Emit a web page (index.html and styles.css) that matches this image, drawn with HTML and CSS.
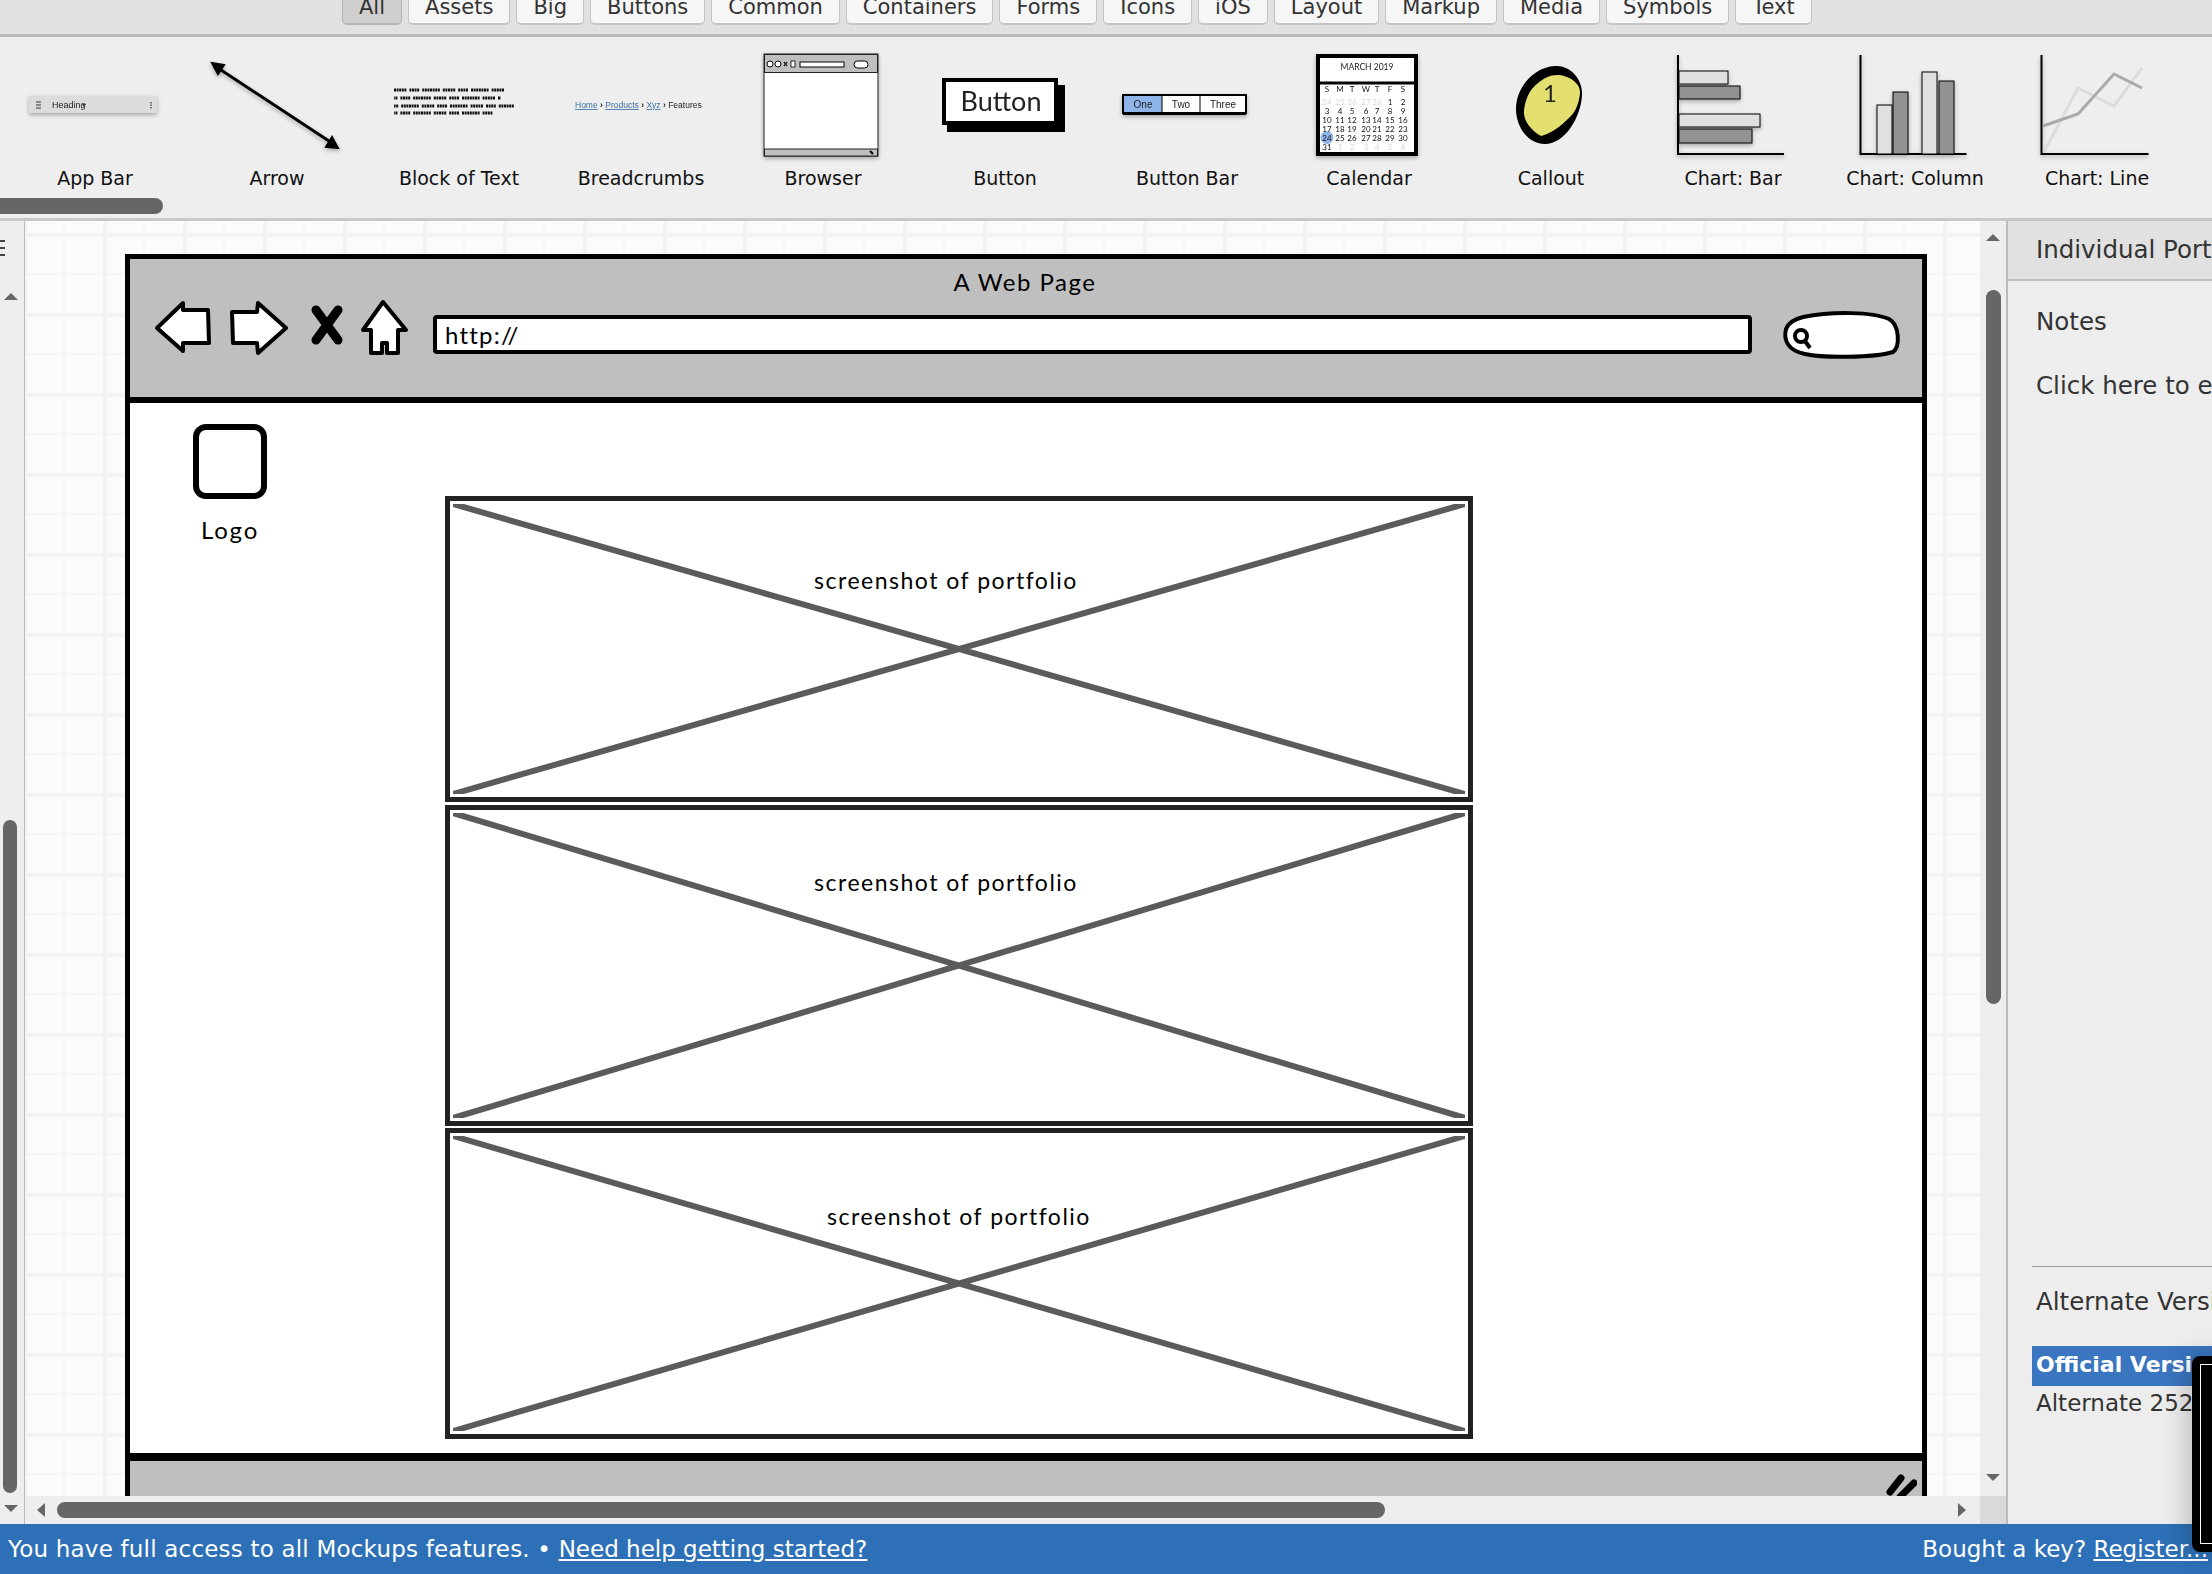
FILE: index.html
```html
<!DOCTYPE html>
<html lang="en">
<head>
  <meta charset="UTF-8">
  <title>Mockups Editor</title>
  <link rel="stylesheet" href="styles.css">
</head>
<body>
<div class="app">

  <!-- Library tabs -->
  <div class="tabbar">
    <div class="tab active">All</div>
    <div class="tab">Assets</div>
    <div class="tab">Big</div>
    <div class="tab">Buttons</div>
    <div class="tab">Common</div>
    <div class="tab">Containers</div>
    <div class="tab">Forms</div>
    <div class="tab">Icons</div>
    <div class="tab">iOS</div>
    <div class="tab">Layout</div>
    <div class="tab">Markup</div>
    <div class="tab">Media</div>
    <div class="tab">Symbols</div>
    <div class="tab">Text</div>
  </div>

  <!-- Component strip -->
  <div class="library">
    <div class="lib-row">
      <div class="lib-item">
        <svg class="thumb" viewBox="0 0 182 125">
          <rect class="drop" x="25" y="59" width="128" height="17" rx="1" fill="#dcdcdc"/>
          <path d="M32 65h5M32 68h5M32 71h5" stroke="#333" stroke-width="1"/>
          <text class="tiny" x="48" y="71">Heading</text>
          <path d="M78 67l4 0-2 3z" fill="#333"/>
          <path d="M147 65v1.500M147 67.500v1.500M147 70v1.500" stroke="#333" stroke-width="1.200"/>
        </svg>
        <div class="lib-label">App Bar</div>
      </div>
      <div class="lib-item">
        <svg class="thumb" viewBox="0 0 182 125">
          <g class="drop">
            <path d="M32 31L146 106" stroke="#000" stroke-width="3"/>
            <path d="M26 26l12 2-6 9zM152 111l-12-1 6-10z" fill="#000" stroke="#000" stroke-width="2"/>
          </g>
        </svg>
        <div class="lib-label">Arrow</div>
      </div>
      <div class="lib-item">
        <svg class="thumb" viewBox="0 0 182 125">
          <g class="scribble">
            <path d="M26 53H138"/>
            <path class="scribble-b" d="M26 61H133"/>
            <path class="scribble-c" d="M26 69H146"/>
            <path class="scribble-b" d="M26 76H125"/>
          </g>
        </svg>
        <div class="lib-label">Block of Text</div>
      </div>
      <div class="lib-item">
        <svg class="thumb" viewBox="0 0 182 125">
          <text class="tiny crumbs" x="25" y="71"><tspan class="crumb-link">Home</tspan> <tspan class="crumb-sep">›</tspan> <tspan class="crumb-link">Products</tspan> <tspan class="crumb-sep">›</tspan> <tspan class="crumb-link">Xyz</tspan> <tspan class="crumb-sep">›</tspan> Features</text>
        </svg>
        <div class="lib-label">Breadcrumbs</div>
      </div>
      <div class="lib-item">
        <svg class="thumb" viewBox="0 0 182 125">
          <g class="drop">
            <rect x="32" y="17" width="114" height="102" fill="#fff" stroke="#222" stroke-width="1"/>
            <rect x="32.500" y="17.500" width="113" height="18" fill="#bfbfbf" stroke="#222" stroke-width="1"/>
            <rect x="32.500" y="112" width="113" height="7" fill="#bfbfbf" stroke="#222" stroke-width="1"/>
          </g>
          <circle cx="38" cy="27" r="3" fill="#fff" stroke="#000"/>
          <circle cx="46" cy="27" r="3" fill="#fff" stroke="#000"/>
          <path d="M52 25l3 4M55 25l-3 4" stroke="#000" stroke-width="1.200"/>
          <rect x="59" y="24" width="4" height="6" fill="#fff" stroke="#000" stroke-width=".8"/>
          <rect x="68" y="25" width="44" height="5" fill="#fff" stroke="#000" stroke-width="1"/>
          <rect x="122" y="24" width="14" height="7" rx="3.500" fill="#fff" stroke="#000" stroke-width="1"/>
          <path d="M138 114l3 3" stroke="#000" stroke-width="2"/>
        </svg>
        <div class="lib-label">Browser</div>
      </div>
      <div class="lib-item">
        <svg class="thumb" viewBox="0 0 182 125">
          <rect x="33" y="48" width="118" height="47" fill="#000"/>
          <rect x="30" y="43" width="112" height="43" fill="#fff" stroke="#000" stroke-width="4"/>
          <text class="thumb-button" x="87" y="74">Button</text>
        </svg>
        <div class="lib-label">Button</div>
      </div>
      <div class="lib-item">
        <svg class="thumb" viewBox="0 0 182 125">
          <g class="drop">
            <rect x="27" y="58" width="123" height="18" fill="#fff" stroke="#000" stroke-width="2"/>
            <rect x="28" y="59" width="38" height="16" fill="#8fb4ea"/>
            <path d="M66 58v18M104 58v18" stroke="#000" stroke-width="1"/>
            <path d="M27 77H150" stroke="#000" stroke-width="2"/>
          </g>
          <text class="tiny mid" x="47" y="71">One</text>
          <text class="tiny mid" x="85" y="71">Two</text>
          <text class="tiny mid" x="127" y="71">Three</text>
        </svg>
        <div class="lib-label">Button Bar</div>
      </div>
      <div class="lib-item">
        <svg class="thumb" viewBox="0 0 182 125">
          <g class="drop">
            <rect x="40" y="19" width="98" height="98" fill="#fff" stroke="#000" stroke-width="4"/>
          </g>
          <path d="M40 46H138" stroke="#000" stroke-width="3"/>
          <circle cx="49" cy="100.500" r="6.500" fill="#8fb4ea"/>
          <text class="cal-title" x="89" y="33">MARCH 2019</text>
          <text class="cal-day" y="55"><tspan x="49">S</tspan><tspan x="62">M</tspan><tspan x="74">T</tspan><tspan x="88">W</tspan><tspan x="99">T</tspan><tspan x="112">F</tspan><tspan x="125">S</tspan></text>
          <text class="cal-day" y="68"><tspan class="cal-dim" x="49">24</tspan><tspan class="cal-dim" x="62">25</tspan><tspan class="cal-dim" x="74">26</tspan><tspan class="cal-dim" x="88">27</tspan><tspan class="cal-dim" x="99">28</tspan><tspan x="112">1</tspan><tspan x="125">2</tspan></text>
          <text class="cal-day" y="77"><tspan x="49">3</tspan><tspan x="62">4</tspan><tspan x="74">5</tspan><tspan x="88">6</tspan><tspan x="99">7</tspan><tspan x="112">8</tspan><tspan x="125">9</tspan></text>
          <text class="cal-day" y="86"><tspan x="49">10</tspan><tspan x="62">11</tspan><tspan x="74">12</tspan><tspan x="88">13</tspan><tspan x="99">14</tspan><tspan x="112">15</tspan><tspan x="125">16</tspan></text>
          <text class="cal-day" y="95"><tspan x="49">17</tspan><tspan x="62">18</tspan><tspan x="74">19</tspan><tspan x="88">20</tspan><tspan x="99">21</tspan><tspan x="112">22</tspan><tspan x="125">23</tspan></text>
          <text class="cal-day" y="104"><tspan x="49">24</tspan><tspan x="62">25</tspan><tspan x="74">26</tspan><tspan x="88">27</tspan><tspan x="99">28</tspan><tspan x="112">29</tspan><tspan x="125">30</tspan></text>
          <text class="cal-day" y="113"><tspan x="49">31</tspan><tspan class="cal-dim" x="62">1</tspan><tspan class="cal-dim" x="74">2</tspan><tspan class="cal-dim" x="88">3</tspan><tspan class="cal-dim" x="99">4</tspan><tspan class="cal-dim" x="112">5</tspan><tspan class="cal-dim" x="125">6</tspan></text>
        </svg>
        <div class="lib-label">Calendar</div>
      </div>
      <div class="lib-item">
        <svg class="thumb" viewBox="0 0 182 125">
          <path d="M95 29C110 28 123 42 122 58C121 80 105 107 85 107C68 107 56 90 56 72C56 50 74 30 95 29Z" fill="#000"/>
          <path d="M97 38C108 38 121 46 120 56C119 66 116 74 110 80C100 90 90 97 81 99C72 94 63 84 64 74C65 62 70 52 78 46C84 41 90 38 97 38Z" fill="#e3e06f"/>
          <text class="callout-num" x="90" y="65">1</text>
        </svg>
        <div class="lib-label">Callout</div>
      </div>
      <div class="lib-item">
        <svg class="thumb" viewBox="0 0 182 125">
          <g class="drop">
            <path d="M36 18V117H142" fill="none" stroke="#000" stroke-width="2"/>
            <rect x="37" y="34" width="49" height="13" fill="#e0e0e0" stroke="#000"/>
            <rect x="37" y="49" width="61" height="13" fill="#929292" stroke="#000"/>
            <rect x="37" y="77" width="81" height="13" fill="#e0e0e0" stroke="#000"/>
            <rect x="37" y="92" width="73" height="14" fill="#929292" stroke="#000"/>
          </g>
        </svg>
        <div class="lib-label">Chart: Bar</div>
      </div>
      <div class="lib-item">
        <svg class="thumb" viewBox="0 0 182 125">
          <g class="drop">
            <path d="M36.500 18V117H142.500" fill="none" stroke="#000" stroke-width="2"/>
            <rect x="53" y="68" width="15" height="49" fill="#e0e0e0" stroke="#000"/>
            <rect x="69" y="55" width="15" height="62" fill="#929292" stroke="#000"/>
            <rect x="98" y="35" width="15" height="82" fill="#e0e0e0" stroke="#000"/>
            <rect x="115" y="44" width="15" height="73" fill="#929292" stroke="#000"/>
          </g>
        </svg>
        <div class="lib-label">Chart: Column</div>
      </div>
      <div class="lib-item">
        <svg class="thumb" viewBox="0 0 182 125">
          <g class="drop">
            <path d="M35.500 18V117H142.500" fill="none" stroke="#000" stroke-width="2"/>
          </g>
          <path d="M38 115L72 51L108 69L136 31" fill="none" stroke="#dcdcdc" stroke-width="3"/>
          <path d="M37 89L72 77L108 37L136 51" fill="none" stroke="#aaa" stroke-width="3"/>
        </svg>
        <div class="lib-label">Chart: Line</div>
      </div>
    </div>
    <div class="lib-scroll"></div>
  </div>

  <div class="workspace">

    <div class="gutter">
      <div class="gutter-menu"></div>
      <div class="tri tri-up gutter-up"></div>
      <div class="gutter-thumb"></div>
      <div class="tri tri-down gutter-down"></div>
    </div>

    <!-- Drawing canvas -->
    <div class="canvas">
      <div class="wf-window">
        <div class="wf-header">
          <div class="wf-title">A Web Page</div>
          <div class="wf-toolbar">
            <svg class="wf-nav" viewBox="0 0 250 56">
              <path d="M1 28L27 3V10H52L53 43H27V51Z"/>
              <path d="M76 12H101L102 3L130 28L102 53L101 43H77Z"/>
              <path class="wf-x" d="M160 10L182 40M182 10L160 40"/>
              <path d="M227 2L250 30H242V53H231V43H226V53H215V30H207Z"/>
            </svg>
            <div class="wf-url">http://</div>
            <svg class="wf-search" viewBox="0 0 119 49">
              <path d="M20 6C50 0 90 1 106 8C117 14 117 36 110 41C90 47 40 47 22 43C6 40 0 30 3 18C5 12 12 8 20 6Z"/>
              <circle cx="18" cy="25" r="6"/>
              <path d="M22 30L27 37"/>
            </svg>
          </div>
        </div>
        <div class="wf-body">
          <div class="wf-side">
            <div class="wf-logo"></div>
            <div class="wf-logo-label">Logo</div>
          </div>
          <div class="wf-shots">
            <div class="shot shot-one">
              <svg class="shot-x" viewBox="0 0 100 100" preserveAspectRatio="none"><path d="M0 0L100 100M0 100L100 0"/></svg>
              <div class="shot-caption">screenshot of portfolio</div>
            </div>
            <div class="shot shot-two">
              <svg class="shot-x" viewBox="0 0 100 100" preserveAspectRatio="none"><path d="M0 0L100 100M0 100L100 0"/></svg>
              <div class="shot-caption">screenshot of portfolio</div>
            </div>
            <div class="shot shot-three">
              <svg class="shot-x" viewBox="0 0 100 100" preserveAspectRatio="none"><path d="M0 0L100 100M0 100L100 0"/></svg>
              <div class="shot-caption">screenshot of portfolio</div>
            </div>
          </div>
        </div>
        <div class="wf-footer">
          <svg class="wf-grip" viewBox="0 0 32 23"><path d="M5 19L16 5M15 24L29 10"/></svg>
        </div>
      </div>
    </div>

    <div class="vscroll">
      <div class="tri tri-up vscroll-up"></div>
      <div class="vscroll-thumb"></div>
      <div class="tri tri-down vscroll-down"></div>
    </div>

    <!-- Properties panel -->
    <div class="panel">
      <div class="panel-head">Individual Portfolio</div>
      <div class="panel-line panel-notes">Notes</div>
      <div class="panel-line panel-edit">Click here to edit notes</div>
      <div class="versions">
        <div class="versions-title">Alternate Versions</div>
        <div class="version selected">Official Version</div>
        <div class="version">Alternate 2520</div>
      </div>
    </div>

    <div class="hscroll">
      <div class="tri tri-left"></div>
      <div class="hscroll-thumb"></div>
      <div class="tri tri-right"></div>
    </div>
    <div class="corner"></div>
  </div>

  <div class="statusbar">
    <div class="status-left">You have full access to all Mockups features. • <a href="#">Need help getting started?</a></div>
    <div>Bought a key? <a href="#">Register...</a></div>
  </div>

  <div class="popup"><div class="popup-inner"></div></div>
</div>
</body>
</html>
```

FILE: styles.css
```css
* {
  margin: 0;
  padding: 0;
  box-sizing: border-box;
}

body {
  font-family: 'DejaVu Sans', sans-serif;
  color: #333;
  overflow: hidden;
}

.app {
  position: relative;
  width: 2212px;
  height: 1574px;
  display: flex;
  flex-direction: column;
  overflow: hidden;
  background: #eee;
}

/* tabs */

.tabbar {
  flex: none;
  height: 37px;
  padding-left: 342px;
  display: flex;
  gap: 6px;
  overflow: hidden;
  background: #e1e1e1;
  border-bottom: 3px solid #bbb;
}

.tab {
  height: 36px;
  margin-top: -11px;
  padding: 0 16px;
  font-size: 21px;
  line-height: 34px;
  background: #f6f6f6;
  border: 1px solid #c4c4c4;
  border-bottom-width: 2px;
  border-radius: 0 0 5px 5px;
  white-space: nowrap;
}

.tab.active {
  background: #cfcfcf;
  border-color: #b5b5b5;
}

/* library strip */

.library {
  flex: none;
  height: 184px;
  background: #eee;
  border-bottom: 3px solid #c8c8c8;
}

.lib-row {
  height: 161px;
  padding-left: 4px;
  display: flex;
  overflow: hidden;
}

.lib-item {
  flex: none;
  width: 182px;
}

.thumb {
  display: block;
  width: 182px;
  height: 125px;
  filter: blur(0.4px);
}

.lib-label {
  font-size: 19px;
  line-height: 33px;
  color: #111;
  text-align: center;
}

.lib-scroll {
  width: 163px;
  height: 16px;
  background: #666;
  border-radius: 0 8px 8px 0;
}

.drop {
  filter: drop-shadow(0 2px 2px rgba(0, 0, 0, 0.3));
}

.tiny {
  font-family: 'Liberation Sans', sans-serif;
  font-size: 9px;
  fill: #222;
}

.mid {
  text-anchor: middle;
  font-size: 10px;
}

.crumbs {
  font-size: 8.500px;
}

.crumb-link {
  fill: #3a6ea8;
  text-decoration: underline;
}

.crumb-sep {
  font-weight: bold;
}

.scribble path {
  fill: none;
  stroke: #111;
  stroke-width: 3;
  stroke-dasharray: 2 .6 2 .6 2 .6 2 .6 2 3 2 .6 2 .6 2 .6 2 3 2 .6 2 .6 2 .6 2 .6 2 .6 2 .6 2 3;
}

.scribble .scribble-b {
  stroke-dashoffset: 9;
}

.scribble .scribble-c {
  stroke-dashoffset: 21;
}

.thumb-button {
  font-family: 'Lato', sans-serif;
  font-size: 27px;
  text-anchor: middle;
  fill: #222;
}

.cal-title {
  font-family: 'Lato', sans-serif;
  font-size: 8.500px;
  text-anchor: middle;
  fill: #222;
}

.cal-day {
  font-family: 'Lato', sans-serif;
  font-size: 8px;
  text-anchor: middle;
  fill: #111;
}

.cal-dim {
  fill: #d8d8d8;
}

.callout-num {
  font-family: 'Lato', sans-serif;
  font-size: 24px;
  text-anchor: middle;
  fill: #222;
}

/* workspace grid */

.workspace {
  flex: 1;
  min-height: 0;
  display: grid;
  grid-template-columns: 25px 1955px 28px 204px;
  grid-template-rows: 1fr 28px;
}

.gutter {
  grid-row: 1 / 3;
  position: relative;
  display: flex;
  flex-direction: column;
  align-items: flex-start;
  padding-left: 3px;
  border-right: 1px solid #bbb;
}

.gutter-menu {
  position: absolute;
  top: 19px;
  left: 0;
  width: 5px;
  height: 20px;
  background: repeating-linear-gradient(to bottom, #444 0 2px, transparent 2px 7px);
}

.gutter-up {
  margin: 72px 0 0 1px;
}

.gutter-thumb {
  width: 14px;
  height: 673px;
  margin-top: 520px;
  background: #666;
  border-radius: 7px;
}

.gutter-down {
  margin: 12px 0 0 1px;
}

.tri {
  flex: none;
  width: 0;
  height: 0;
  border-style: solid;
  border-color: transparent;
}

.tri-up {
  border-width: 0 7px 7px;
  border-bottom-color: #666;
}

.tri-down {
  border-width: 7px 7px 0;
  border-top-color: #666;
}

.tri-left {
  border-width: 7px 8px 7px 0;
  border-right-color: #666;
}

.tri-right {
  border-width: 7px 0 7px 8px;
  border-left-color: #666;
}

/* canvas */

.canvas {
  overflow: hidden;
  padding: 33px 0 0 100px;
  background-color: #fbfbfb;
  background-image:
    linear-gradient(to right, #f3f3f3 4px, transparent 4px),
    linear-gradient(to bottom, #f3f3f3 4px, transparent 4px),
    linear-gradient(to right, #f5f5f5 2px, transparent 2px),
    linear-gradient(to bottom, #f5f5f5 2px, transparent 2px);
  background-size: 80px 80px;
  background-position: 78px 0, 0 12px, 38px 0, 0 52px;
}

.wf-window {
  width: 1802px;
  height: 1300px;
  background: #fff;
  border: 5px solid #000;
  font-family: 'Lato', sans-serif;
  color: #000;
}

.wf-header {
  height: 144px;
  background: #bfbfbf;
  border-bottom: 6px solid #000;
}

.wf-title {
  height: 41px;
  padding: 8px 2px 0 0;
  font-size: 24px;
  letter-spacing: 1.500px;
  line-height: 30px;
  text-align: center;
}

.wf-toolbar {
  display: flex;
  align-items: flex-start;
  padding-left: 26px;
}

.wf-nav {
  flex: none;
  width: 250px;
  height: 56px;
  overflow: visible;
}

.wf-nav path {
  fill: #fff;
  stroke: #000;
  stroke-width: 4;
  stroke-linejoin: round;
}

.wf-nav .wf-x {
  stroke-width: 9;
  stroke-linecap: round;
}

.wf-url {
  width: 1319px;
  height: 39px;
  margin: 15px 0 0 27px;
  padding-left: 8px;
  font-size: 24px;
  letter-spacing: 1.200px;
  line-height: 31px;
  background: #fff;
  border: 4px solid #000;
  border-radius: 4px;
}

.wf-search {
  flex: none;
  width: 119px;
  height: 49px;
  margin: 11px 0 0 31px;
  overflow: visible;
}

.wf-search path,
.wf-search circle {
  fill: #fff;
  stroke: #000;
  stroke-width: 4;
}

.wf-body {
  height: 1050px;
  display: flex;
}

.wf-side {
  flex: none;
  width: 315px;
  padding: 21px 0 0 63px;
}

.wf-logo {
  width: 74px;
  height: 75px;
  border: 6px solid #000;
  border-radius: 13px;
}

.wf-logo-label {
  width: 74px;
  margin-top: 15px;
  font-size: 24px;
  letter-spacing: 1.800px;
  line-height: 32px;
  text-align: center;
}

.wf-shots {
  flex: none;
  width: 1028px;
  padding-top: 93px;
  display: flex;
  flex-direction: column;
  gap: 3px;
}

.shot {
  position: relative;
  padding: 3px;
  border: 5px solid #222;
}

.shot-one {
  height: 306px;
}

.shot-two {
  height: 321px;
}

.shot-three {
  height: 311px;
  margin-top: -1px;
}

.shot-x {
  display: block;
  width: 100%;
  height: 100%;
}

.shot-x path {
  fill: none;
  stroke: #5b5b5b;
  stroke-width: 6;
  stroke-linecap: round;
  vector-effect: non-scaling-stroke;
}

.shot-caption {
  position: absolute;
  left: 496px;
  transform: translateX(-50%);
  font-size: 23px;
  letter-spacing: 1.500px;
  line-height: 30px;
  white-space: nowrap;
}

.shot-one .shot-caption {
  top: 64px;
}

.shot-two .shot-caption {
  top: 57px;
}

.shot-three .shot-caption {
  top: 68px;
  left: 509px;
}

.wf-footer {
  height: 60px;
  padding: 12px 5px 0 0;
  background: #bfbfbf;
  border-top: 8px solid #000;
  display: flex;
  justify-content: flex-end;
  align-items: flex-start;
}

.wf-grip {
  width: 32px;
  height: 23px;
}

.wf-grip path {
  fill: none;
  stroke: #000;
  stroke-width: 7;
  stroke-linecap: round;
}

/* scrollbars */

.vscroll {
  display: flex;
  flex-direction: column;
  align-items: center;
  background: #eee;
  border-right: 2px solid #bbb;
}

.vscroll-up {
  margin-top: 13px;
}

.vscroll-thumb {
  width: 15px;
  height: 714px;
  margin-top: 49px;
  background: #666;
  border-radius: 8px;
}

.vscroll-down {
  margin-top: auto;
  margin-bottom: 15px;
}

.hscroll {
  display: flex;
  align-items: center;
  padding: 0 14px 0 12px;
  background: #eee;
}

.hscroll-thumb {
  width: 1328px;
  height: 16px;
  margin-left: 12px;
  background: #666;
  border-radius: 8px;
}

.tri-right {
  margin-left: auto;
}

.corner {
  background: #d9d9d9;
  border-right: 2px solid #bbb;
}

/* right panel */

.panel {
  grid-column: 4;
  grid-row: 1 / 3;
  display: flex;
  flex-direction: column;
  overflow: hidden;
  white-space: nowrap;
  font-size: 24.500px;
  background: #ededed;
}

.panel-head {
  flex: none;
  height: 60px;
  padding-left: 28px;
  line-height: 58px;
  background: #e1e1e1;
  border-bottom: 2px solid #c0c0c0;
}

.panel-line {
  padding-left: 28px;
  line-height: 30px;
}

.panel-notes {
  margin-top: 26px;
}

.panel-edit {
  margin-top: 34px;
}

.versions {
  margin-top: auto;
  margin-left: 24px;
  padding-bottom: 104px;
  border-top: 1px solid #999;
}

.versions-title {
  padding-left: 4px;
  line-height: 30px;
  margin-top: 20px;
  margin-bottom: 29px;
}

.version {
  height: 34px;
  padding-left: 4px;
  font-size: 23px;
  line-height: 34px;
}

.version.selected {
  height: 40px;
  font-size: 22px;
  line-height: 38px;
  font-weight: bold;
  color: #fff;
  background: #3a75bf;
}

/* status bar */

.statusbar {
  flex: none;
  height: 50px;
  padding: 0 4px 0 8px;
  display: flex;
  justify-content: space-between;
  align-items: center;
  font-size: 23px;
  color: #fff;
  background: #2d70b7;
}

.statusbar a {
  color: #fff;
}

.status-left {
  letter-spacing: 0.200px;
}

.status-left a {
  letter-spacing: 0;
}

/* black popup over the corner */

.popup {
  position: absolute;
  top: 1356px;
  left: 2192px;
  width: 60px;
  height: 196px;
  padding: 8px;
  background: #000;
  border-radius: 8px;
  box-shadow: -6px 0 24px rgba(0, 0, 0, 0.2);
}

.popup-inner {
  height: 100%;
  border: 1px solid #fff;
}
```
